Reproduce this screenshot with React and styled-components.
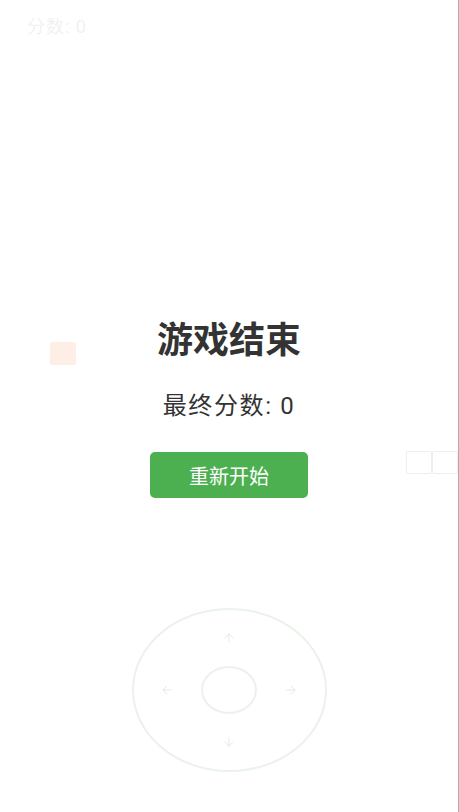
import React from "react";
import styled, { createGlobalStyle } from "styled-components";
import { ArrowUp, ArrowDown, ArrowLeft, ArrowRight } from "lucide-react";

const Global = createGlobalStyle`
  html, body {
    margin: 0;
    padding: 0;
    background: #fff;
    font-family: "Roboto", "Noto Sans CJK SC", sans-serif;
  }
`;

const Frame = styled.div`
  width: 459px;
  height: 812px;
  box-sizing: border-box;
  border-right: 1px solid #acacac;
  overflow: hidden;
`;

const Stage = styled.div`
  position: relative;
  width: 100%;
  height: 100%;
  display: flex;
  flex-direction: column;
  align-items: center;
`;

const ScoreBar = styled.div`
  align-self: stretch;
  padding: 14px 27px 0;
  font-size: 18px;
  letter-spacing: 1px;
  color: #a0a0a0;
  line-height: 26px;
`;

const Cell = styled.div`
  position: absolute;
  box-sizing: border-box;
  width: 26px;
  height: 23px;
  border-radius: 2px;
`;

const Food = styled(Cell)`
  background: #f28e58;
`;

const Segment = styled(Cell)`
  border: 1.5px solid #8a8a8a;
  background: #fff;
`;

const Joystick = styled.div`
  margin-top: auto;
  margin-bottom: 40px;
  position: relative;
  width: 195px;
  height: 164px;
  box-sizing: border-box;
  border: 2px solid #72a872;
  border-radius: 50%;
  display: grid;
  grid-template-columns: 1fr 56px 1fr;
  grid-template-rows: 1fr 48px 1fr;
  place-items: center;
  color: #444;
`;

const Knob = styled.div`
  grid-column: 2;
  grid-row: 2;
  width: 56px;
  height: 48px;
  box-sizing: border-box;
  border: 2px solid #72a872;
  border-radius: 50%;
`;

const Arrow = styled.div`
  grid-column: ${(p) => p.$col};
  grid-row: ${(p) => p.$row};
  display: flex;
`;

const Overlay = styled.div`
  position: absolute;
  inset: 0;
  background: rgba(255, 255, 255, 0.85);
  display: flex;
  flex-direction: column;
  align-items: center;
  justify-content: center;
  padding-top: 7px;
`;

const Title = styled.div`
  font-size: 36px;
  font-weight: 700;
  color: #333;
  line-height: 40px;
`;

const FinalScore = styled.div`
  margin-top: 30px;
  font-size: 24px;
  letter-spacing: 1.6px;
  color: #333;
  line-height: 30px;
`;

const Restart = styled.button`
  margin-top: 31px;
  width: 158px;
  height: 46px;
  border: none;
  border-radius: 5px;
  background: #4caf50;
  color: #fff;
  font-family: inherit;
  font-size: 20px;
  cursor: pointer;
`;

export default function App() {
  return (
    <>
      <Global />
      <Frame>
        <Stage>
          <ScoreBar>分数: 0</ScoreBar>
          <Food style={{ left: 50, top: 342 }} />
          <Segment style={{ left: 406, top: 451 }} />
          <Segment style={{ left: 432, top: 451 }} />
          <Joystick>
            <Arrow $col={2} $row={1}>
              <ArrowUp size={14} strokeWidth={1.5} />
            </Arrow>
            <Arrow $col={1} $row={2}>
              <ArrowLeft size={14} strokeWidth={1.5} />
            </Arrow>
            <Knob />
            <Arrow $col={3} $row={2}>
              <ArrowRight size={14} strokeWidth={1.5} />
            </Arrow>
            <Arrow $col={2} $row={3}>
              <ArrowDown size={14} strokeWidth={1.5} />
            </Arrow>
          </Joystick>
          <Overlay>
            <Title>游戏结束</Title>
            <FinalScore>最终分数: 0</FinalScore>
            <Restart>重新开始</Restart>
          </Overlay>
        </Stage>
      </Frame>
    </>
  );
}
